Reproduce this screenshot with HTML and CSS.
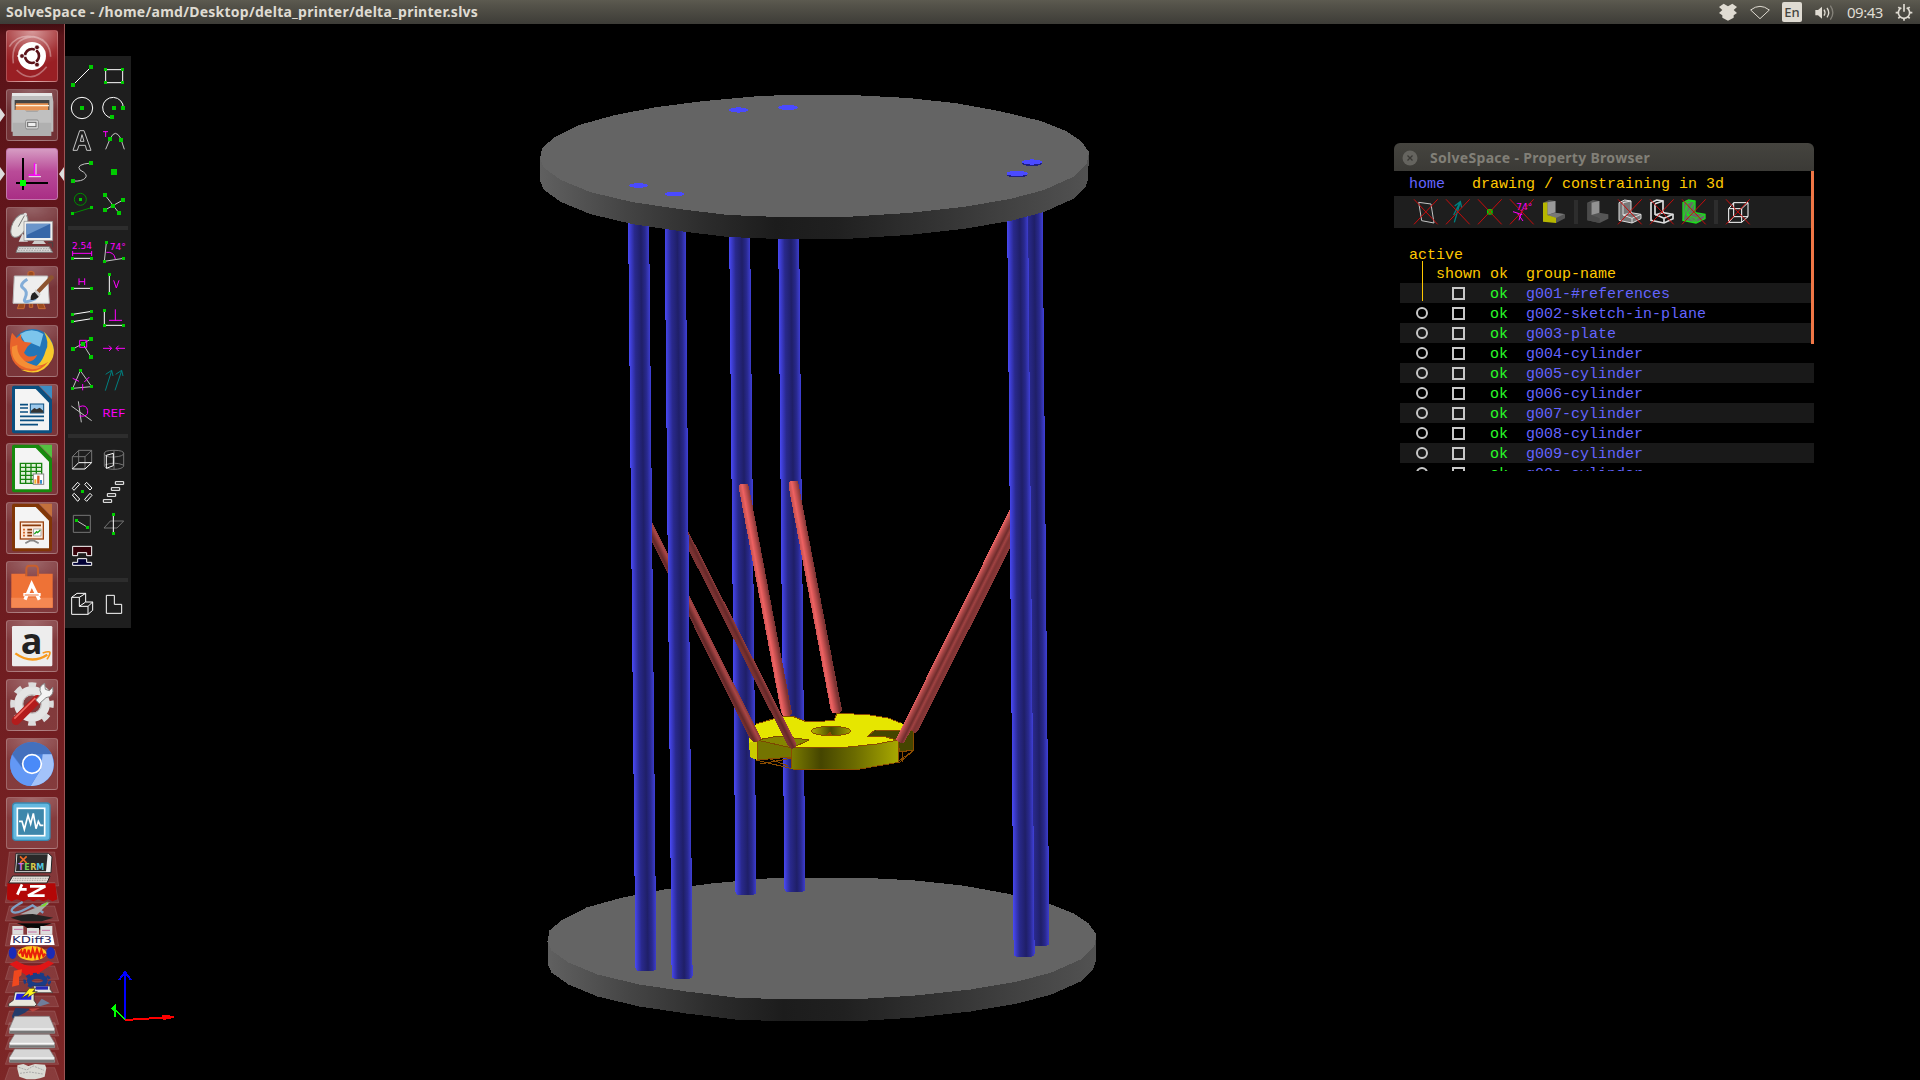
FILE: index.html
```html
<!DOCTYPE html>
<html lang="en">
<head>
<meta charset="utf-8">
<title>SolveSpace</title>
<link rel="stylesheet" href="styles.css">
</head>
<body>
<header class="panel">
  <span class="panel-title">SolveSpace - /home/amd/Desktop/delta_printer/delta_printer.slvs</span>
  <div class="indicators">
    <svg width="20" height="24" viewBox="54 0 60 72"><path d="M71 11L84 19L97 11L111 21L101 30L111 39L101 46V53L84 62L67 53V46L57 39L67 30L57 21Z" fill="#dfdbd2"/></svg>
    <svg width="22" height="24" viewBox="147 0 66 72"><path d="M152 30Q180 8 208 30L180 56Z" fill="none" stroke="#dfdbd2" stroke-width="3"/></svg>
    <span class="lang">En</span>
    <svg width="22" height="24" viewBox="341 0 66 72"><path d="M345 30H353L365 20V56L353 46H345Z" fill="#dfdbd2"/><path d="M371 29Q377 38 371 47M380 24Q390 38 380 52" fill="none" stroke="#dfdbd2" stroke-width="4"/><path d="M390 17Q405 38 390 59" fill="none" stroke="#85827a" stroke-width="4"/></svg>
    <span class="clock">09:43</span>
    <svg width="18" height="24" viewBox="585 0 54 72"><g fill="none" stroke="#dfdbd2"><path d="M604 23A17 17 0 1 0 620 23M612 12V35" stroke-width="5"/><path d="M595 38H587M629 38H637M600 50L595 55M624 50L629 55M600 26L595 21M624 26L629 21M612 55V62" stroke-width="5"/></g></svg>
  </div>
</header>
<div class="desktop">
<nav class="launcher">
  <div class="tile ubuntu"><svg viewBox="18 30 156 156"><path d="M40 130Q30 55 100 50Q150 60 152 110M50 150Q95 195 140 140M28 80Q60 30 130 60" fill="none" stroke="#fff" stroke-opacity=".35" stroke-width="5"/><circle cx="96" cy="108" r="42" fill="#fff"/><circle cx="96" cy="108" r="21" fill="none" stroke="#5a1218" stroke-width="8"/><path d="M96 108L52 108M96 108L117 72M96 108L117 144" stroke="#fff" stroke-width="4"/><g fill="#5a1218" stroke="#fff" stroke-width="2"><circle cx="66" cy="108" r="7"/><circle cx="111" cy="82" r="7"/><circle cx="111" cy="134" r="7"/></g></svg></div>
  <div class="tile"><svg viewBox="18 207 156 156"><path d="M36 219H156L160 245V335H34V245Z" fill="#bdbdbd"/><path d="M36 219H156V228H36Z" fill="#e6e6e6"/><rect x="44" y="240" width="104" height="35" fill="#444"/><path d="M48 250H145V272H46Z" fill="#e99454"/><path d="M47 257H147" stroke="#fff2dc" stroke-width="4"/><path d="M38 270H74L80 275H112L118 270H154V348H38Z" fill="#b0b0b0"/><path d="M38 270H154V308H38Z" fill="#d0d0d0" opacity=".5"/><rect x="77" y="300" width="38" height="27" rx="4" fill="#ddd" stroke="#888" stroke-width="3"/><rect x="83" y="307" width="25" height="13" fill="#eee" stroke="#666" stroke-width="3"/></svg></div>
  <div class="tile solve"><svg viewBox="18 384 156 156"><path d="M69 414V510M48 489H144" stroke="#000" stroke-width="6"/><path d="M104 430V468M86 465H120" stroke="#f0f" stroke-width="5"/><path d="M108 432V464M86 470H123" stroke="#eee" stroke-width="3"/><rect x="60" y="480" width="18" height="18" fill="#0f0"/></svg></div>
  <div class="tile"><svg viewBox="18 561 156 156"><path d="M68 640L84 665H56Z" fill="#ddd"/><ellipse cx="58" cy="617" rx="21" ry="38" transform="rotate(28 58 617)" fill="#e8e8e3" stroke="#888" stroke-width="3"/><path d="M55 620L76 582" stroke="#777" stroke-width="3"/><circle cx="76" cy="583" r="5" fill="#ddd"/><path d="M72 604H158V662H72Z" fill="#eee" stroke="#888" stroke-width="2"/><rect x="79" y="611" width="72" height="43" fill="#3666a8"/><path d="M80 612H150L80 645Z" fill="#6b95ca"/><path d="M103 662H130L138 672H96Z" fill="#ccc"/><path d="M55 680H148L158 697H48Z" fill="#ddd" stroke="#777" stroke-width="3"/><path d="M57 686H150M54 691H153" stroke="#888" stroke-width="2" stroke-dasharray="5 3"/><path d="M144 668H158V682" fill="none" stroke="#444" stroke-width="3"/></svg></div>
  <div class="tile"><svg viewBox="18 738 156 156"><path d="M84 768V757Q93 750 102 757V768M60 845L52 866H72L76 845M110 845L116 866H136L128 845M88 845V862H98V845" fill="#9b4c20" stroke="#c86a33" stroke-width="3"/><path d="M43 768H143L148 850H39Z" fill="#eee" stroke="#bbb" stroke-width="3"/><path d="M82 778Q55 795 70 805T75 835T108 835" fill="none" stroke="#83add8" stroke-width="9"/><path d="M108 812L152 766Q163 765 161 775L118 820Z" fill="#8d5430"/><path d="M106 808L122 822L115 833L104 820Z" fill="#ccc"/><path d="M104 816Q90 822 92 840Q108 840 116 830Z" fill="#222"/></svg></div>
  <div class="tile"><svg viewBox="18 -15 156 156"><circle cx="98" cy="60" r="63" fill="#2276b8"/><path d="M60 12Q95 -10 130 12L120 50L95 40L75 38Z" fill="#7cc5ec"/><path d="M132 5Q176 50 155 90Q125 145 62 119Q120 125 137 62Q150 40 132 5Z" fill="#f7c92c"/><path d="M36 8L50 24L64 12Q60 30 74 36L95 38L82 50L72 68Q85 88 112 74Q100 100 74 94Q110 120 145 95Q110 140 60 115Q30 95 30 55Q30 25 36 8Z" fill="#e8632b"/><path d="M36 50Q32 90 65 108Q95 126 125 110Q80 105 62 80Q50 65 52 45Z" fill="#f58d35"/></svg></div>
  <div class="tile"><svg viewBox="18 163 156 156"><path d="M42 168H116L156 210V305Q156 311 150 311H42Q36 311 36 305V174Q36 168 42 168Z" fill="#0a4f80"/><path d="M118 168H156V208Z" fill="#3c8dc4"/><path d="M45 178H107L147 219V302H45Z" fill="#f4f4f4"/><path d="M60 225H84M60 235H84M60 247H84M60 260H132M60 272H132M60 285H114" stroke="#0b4f81" stroke-width="5"/><rect x="91" y="223" width="40" height="27" fill="#9cc9ed" stroke="#0b4f81" stroke-width="3"/><path d="M93 249V243L103 235L110 239L119 234L130 243V249Z" fill="#333"/></svg></div>
  <div class="tile"><svg viewBox="18 340 156 156"><path d="M42 345H116L156 387V482Q156 488 150 488H42Q36 488 36 482V351Q36 345 42 345Z" fill="#178a0e"/><path d="M118 345H156V385Z" fill="#54c040"/><path d="M45 355H107L147 396V479H45Z" fill="#f4f4f4"/><path d="M61 401H125V461H61ZM61 413H125M61 425H125M61 437H125M61 449H125M77 401V461M93 401V461M109 401V461" fill="#dff0d8" stroke="#17820f" stroke-width="4"/><rect x="100" y="433" width="31" height="31" fill="#fff" stroke="#888" stroke-width="3"/><path d="M106 462V449" stroke="#f2b22b" stroke-width="6"/><path d="M123 462V451" stroke="#3a8fd0" stroke-width="6"/><path d="M115 462V438" stroke="#d75a1f" stroke-width="7"/></svg></div>
  <div class="tile"><svg viewBox="18 517 156 156"><path d="M42 522H116L156 564V659Q156 665 150 665H42Q36 665 36 659V528Q36 522 42 522Z" fill="#813606"/><path d="M118 522H156V562Z" fill="#c4713c"/><path d="M45 532H107L147 573V656H45Z" fill="#f4f4f4"/><rect x="61" y="577" width="69" height="51" fill="#fde8d8" stroke="#9b4312" stroke-width="4"/><path d="M67 587H123M82 600H96M82 609H96M82 618H96" stroke="#8a3b0c" stroke-width="5"/><path d="M69 600H75M69 609H75M69 618H75" stroke="#d66a30" stroke-width="5"/><rect x="101" y="598" width="22" height="21" fill="#fff" stroke="#888" stroke-width="2"/><path d="M103 613L110 606L113 609L121 601" fill="none" stroke="#20a020" stroke-width="4"/><path d="M96 628V634M76 641L90 633H102L116 641" fill="none" stroke="#888" stroke-width="5"/></svg></div>
  <div class="tile"><svg viewBox="18 694 156 156"><path d="M79 745V719Q79 708 88 708H104Q114 708 114 719V745" fill="none" stroke="#c85f2c" stroke-width="6"/><path d="M34 732H76V740H117V732H158V834H34Z" fill="#ee7236"/><path d="M34 804H158V834H34Z" fill="#f58852"/><path d="M75 810L95 763L118 810M70 795H122" fill="none" stroke="#fff" stroke-width="10"/><path d="M74 796H116" stroke="#ee7236" stroke-width="3"/></svg></div>
  <div class="tile"><svg viewBox="18 0 156 156"><rect x="36" y="18" width="121" height="121" rx="4" fill="#ededed"/><text x="95" y="101" text-anchor="middle" class="amazon">a</text><path d="M46 100Q95 135 142 104" fill="none" stroke="#f79a1c" stroke-width="7"/><path d="M128 99Q150 92 150 98T141 118" fill="none" stroke="#f79a1c" stroke-width="5"/></svg></div>
  <div class="tile"><svg viewBox="18 177 156 156"><circle cx="96" cy="252" r="40" fill="none" stroke="#e4e4e4" stroke-width="27"/><circle cx="96" cy="252" r="58" fill="none" stroke="#dcdcdc" stroke-width="15" stroke-dasharray="23 22.5" stroke-dashoffset="12"/><circle cx="96" cy="252" r="28" fill="none" stroke="#bbb" stroke-width="3"/><path d="M48 302L112 238" stroke="#b31c1c" stroke-width="26" stroke-linecap="round"/><path d="M43 296L106 234" stroke="#f06a60" stroke-width="5"/><path d="M107 240L124 222Q112 200 134 190L136 208L148 212L158 202Q164 230 138 233L118 251Z" fill="#f4f4f4" stroke="#888" stroke-width="3"/></svg></div>
  <div class="tile"><svg viewBox="18 354 156 156"><circle cx="96" cy="432" r="66" fill="#4c83dd"/><path d="M37 402Q60 364 98 366Q140 370 155 403H98L74 452Z" fill="#4470bd"/><path d="M155 403Q175 460 130 488Q110 500 92 498L123 447L128 403Z" fill="#a3c3fa"/><path d="M36 404Q20 450 50 480Q68 498 92 498L118 455L96 462L66 444Z" fill="#6398f5"/><circle cx="96" cy="432" r="28" fill="#4a8af8" stroke="#fff" stroke-width="5"/></svg></div>
  <div class="tile"><svg viewBox="18 531 156 156"><rect x="38" y="549" width="112" height="112" rx="10" fill="#63b8e0" stroke="#3a87ae" stroke-width="4"/><rect x="52" y="565" width="82" height="82" fill="#3e87ab" stroke="#fff" stroke-width="5"/><path d="M57 604H66L73 628L84 586L92 612L100 580L108 626L115 604L121 616H130" fill="none" stroke="#fff" stroke-width="5"/></svg></div>
  <svg class="stack" width="64" height="231" viewBox="0 12 192 693">
    <g fill="#fff" fill-opacity=".1" stroke="#fff" stroke-opacity=".2" stroke-width="2"><path d="M28 18H164L176 120H16Z"/><path d="M28 110H164L176 170H16Z"/><path d="M28 180H164L176 225H16Z"/><path d="M28 232H164L176 300H16Z"/><path d="M28 310H164L176 350H16Z"/><path d="M28 360H164L176 400H16Z"/><path d="M28 405H164L176 440H16Z"/><path d="M28 450H164L176 482H16Z"/><path d="M28 495H164L176 535H16Z"/><path d="M28 530H164L176 570H16Z"/><path d="M28 575H164L176 610H16Z"/><path d="M28 620H164L176 655H16Z"/><path d="M28 665H164L178 705H14Z"/></g>
    <path d="M48 22H145L156 32L153 80H44Z" fill="#eee" stroke="#222" stroke-width="3"/><path d="M52 25H143L138 76H48Z" fill="#292929"/>
    <path d="M60 31L80 51M80 31L60 51" stroke="#ee6a25" stroke-width="5"/>
    <g class="xterm"><text x="55" y="72" fill="#cf70df">T</text><text x="73" y="72" fill="#75d052">E</text><text x="91" y="72" fill="#d8c94b">R</text><text x="109" y="72" fill="#55c4dc">M</text></g>
    <path d="M22 112H166L172 160L158 166L145 160L130 166L115 160L100 166L85 160L70 166L50 160L35 166L21 160Z" fill="#b30707"/>
    <path d="M38 90H150L141 111H26Z" fill="#e8e2dc" stroke="#222" stroke-width="3"/><path d="M40 97H144M36 103H140" stroke="#777" stroke-width="2" stroke-dasharray="3 2"/>
    <path d="M66 115L52 146M62 130H80M90 121H136L84 149H134" fill="none" stroke="#fff" stroke-width="8"/>
    <path d="M68 168Q25 190 38 198T98 178L130 200M125 178L144 172" fill="none" stroke="#7fa0c4" stroke-width="7"/><path d="M60 205L132 175L150 168L135 183L110 207Z" fill="#aaa"/><path d="M118 182L145 166L135 181Z" fill="#7ddb2d"/>
    <path d="M32 215Q70 204 98 204L160 215L125 226H65Z" fill="#222"/><path d="M50 232H156L130 240L122 252Q100 242 82 246L72 239Z" fill="#080808"/>
    <path d="M37 240H70V266H37ZM81 246H117V266H81ZM121 240H157V266H121Z" fill="#ddd"/><path d="M42 250H68M84 258H110M126 253H150" stroke="#c76fa5" stroke-width="3"/><path d="M35 266H158L164 297H30Z" fill="#fff"/><text x="96" y="290" text-anchor="middle" textLength="120" lengthAdjust="spacingAndGlyphs" class="kdiff">KDiff3</text>
    <ellipse cx="38" cy="321" rx="12" ry="18" fill="#1b2bb7"/><ellipse cx="152" cy="321" rx="13" ry="18" fill="#1b2bb7"/><ellipse cx="96" cy="322" rx="43" ry="22" fill="#ffc81e"/><path d="M57 323L64 314L68 332L74 309L80 335L86 311L92 336L98 310L105 333L111 311L118 334L124 312L130 331L136 323" fill="none" stroke="#e8200a" stroke-width="6"/>
    <path d="M28 354L50 344Q95 375 145 344L162 352L92 397Z" fill="#e01616"/>
    <path d="M42 374L66 370L64 388L57 393V417L36 422Z" fill="#f0481e"/><ellipse cx="112" cy="404" rx="24" ry="13" fill="none" stroke="#1b3c85" stroke-width="14"/><ellipse cx="112" cy="404" rx="38" ry="20" fill="none" stroke="#1b3c85" stroke-width="8" stroke-dasharray="12 9"/>
    <path d="M100 420H150V430L158 440H105Z" fill="#e5e5dc" stroke="#333" stroke-width="2"/><path d="M107 421H144V431H107Z" fill="#2428b4"/><path d="M45 438H102V463L110 475L104 481H26V473L40 463Z" fill="#e8e8dc" stroke="#222" stroke-width="2"/><path d="M50 443H94V461H46Z" fill="#2020e0"/><path d="M64 457L88 427H107L98 437H112L82 455L86 444Z" fill="#fff31d" stroke="#333" stroke-width="2"/>
    <path d="M36 510L46 486L90 488L75 500L38 518Z" fill="#243b6a"/><path d="M110 478L125 458L150 472L120 481Z" fill="#6f7d9b"/><path d="M86 488L120 486L98 497Z" fill="#b7443e"/>
    <g fill="#d6d6d6" stroke="#7d7d7d" stroke-width="2"><path d="M44 511H148L164 548V562H28V548Z"/><path d="M44 565H148L164 591V605H28V591Z"/><path d="M44 609H148L164 635V649H28V635Z"/></g><path d="M29 549H163M29 592H163M29 636H163" stroke="#fff" stroke-width="3"/><path d="M30 558H163M30 601H163M30 645H163" stroke="#777" stroke-width="7"/>
    <path d="M52 658L70 654L85 660L105 654L135 656L139 666L134 692L120 697L105 700H80L58 692L52 668Z" fill="#dadad4"/><path d="M56 664L80 672L100 660L132 673M60 682L90 678L128 684" stroke="#aaa" stroke-width="3" fill="none" stroke-dasharray="6 3"/>
  </svg>
</nav>
<main class="viewport">
<svg class="scene" viewBox="65 24 1855 1056" shape-rendering="crispEdges">
  <defs>
    <linearGradient id="rim"><stop offset="0" stop-color="#606060"/><stop offset=".15" stop-color="#454545"/><stop offset=".3" stop-color="#2c2c2c"/><stop offset=".43" stop-color="#1c1c1c"/><stop offset=".54" stop-color="#202020"/><stop offset=".75" stop-color="#363636"/><stop offset="1" stop-color="#525252"/></linearGradient>
    <linearGradient id="pole"><stop offset="0" stop-color="#4848f0"/><stop offset=".12" stop-color="#3a3ac8"/><stop offset=".3" stop-color="#29298c"/><stop offset=".6" stop-color="#1f1f68"/><stop offset=".8" stop-color="#29298e"/><stop offset="1" stop-color="#3e3ed2"/></linearGradient>
    <linearGradient id="rodA" gradientUnits="userSpaceOnUse" x1="648" y1="535" x2="657" y2="530.5"><stop offset="0" stop-color="#7a3232"/><stop offset=".3" stop-color="#642828"/><stop offset=".75" stop-color="#a84646"/><stop offset="1" stop-color="#8c3a3a"/></linearGradient>
    <linearGradient id="rodC" gradientUnits="userSpaceOnUse" x1="739" y1="485" x2="749" y2="483.2"><stop offset="0" stop-color="#c85252"/><stop offset=".3" stop-color="#ee6262"/><stop offset=".6" stop-color="#c04e4e"/><stop offset="1" stop-color="#7a3232"/></linearGradient>
    <linearGradient id="rodE" gradientUnits="userSpaceOnUse" x1="1009" y1="511" x2="1024" y2="518.5"><stop offset="0" stop-color="#f06666"/><stop offset=".2" stop-color="#b04a4a"/><stop offset=".45" stop-color="#702c2c"/><stop offset=".6" stop-color="#a04242"/><stop offset=".75" stop-color="#7c3232"/><stop offset="1" stop-color="#8a3838"/></linearGradient>
    <linearGradient id="front"><stop offset="0" stop-color="#7c7c00"/><stop offset=".28" stop-color="#454500"/><stop offset=".6" stop-color="#6c6c00"/><stop offset="1" stop-color="#a8a800"/></linearGradient>
    <linearGradient id="hole"><stop offset="0" stop-color="#b5b500"/><stop offset=".5" stop-color="#4a4a00"/><stop offset="1" stop-color="#a0a000"/></linearGradient>
    <path id="face" d="M540 159L542 148L555 137L579 125L615 115L657 107L704 101L759 96L789 95H852L908 98L955 103L999 111L1041 121L1066 131L1081 141L1089 152L1087 163L1073 177L1044 190L1010 199L963 207L908 213L853 216.500H766L728 215L679 209L632 202L590 192L561 180L544 168Z"/>
    <g id="plate"><path fill="url(#rim)" d="M540 159L1089 152L1088 180L1086 186L1073 199L1044 212L1010 221L963 229L908 235L853 238.500H766L728 237L679 231L632 224L590 214L561 202L544 190L540 181Z"/><use href="#face" fill="#646464"/></g>
  </defs>
  <use href="#plate" x="7.5" y="782.5"/>
  <g fill="url(#pole)">
    <rect width="21" height="680" rx="5" ry="3" transform="matrix(1 0 .0095 1 729 215)"/>
    <rect width="21" height="677" rx="5" ry="3" transform="matrix(1 0 .0095 1 778 215)"/>
  </g>
  <g class="effector">
    <path fill="none" stroke="#8a4c00" d="M756 760L793 769L860 769L900 762L913 751V730M756 760L780 755M760 764L793 758M897 762L913 751M765 757L788 766M902 750L903 762"/>
    <path fill="#c9c900" d="M749 743L757 739V760L750 757Z"/>
    <path fill="#e6e600" d="M749 743L750 732L756 724L783 716L792 716L807 722L834 720.500L837 713L870 715L888 718L901 723L913 730L897 740L877 744L843 747H792L757 740Z"/>
    <path fill="#747400" d="M757 740L791 748V757L757 760Z"/>
    <path fill="#858500" stroke="#7c4700" d="M757 740L779 736L809 740L792 748Z"/>
    <path fill="#454500" stroke="#8a4c00" d="M868 736L875 730L913 731V750L900 752L897 740L882 736Z"/>
    <path fill="url(#front)" d="M791 747L843 748L877 744L898 740V762L857 769H791Z"/>
    <path fill="none" stroke="#8a4c00" d="M756 724L783 716L792 716L807 722L834 720.500L837 713L870 715L888 718L901 723M757 740V760L791 757M791 748V768M791 747.500H843L877 744L898 740V762"/>
    <ellipse cx="831" cy="731" rx="19.500" ry="4.800" fill="url(#hole)" stroke="#8a4c00"/>
    <path d="M826 735L830 731L832 735Z" fill="#8a4c00"/>
  </g>
  <path fill="url(#rodA)" d="M645 508L761 738L759 741L754 742L750 739L645 528Z"/>
  <path fill="url(#rodC)" d="M739 489V485L741 484H748L749 487L792 713L789 716H783L781 712Z"/>
  <path fill="url(#rodC)" transform="translate(49.5 -3)" d="M739 489V485L741 484H748L749 487L792.500 713L789.500 716H783L781 712Z"/>
  <path fill="url(#rodA)" transform="translate(35 -2)" d="M645 517L761.500 746L760 750L756 751L753 748L645 535Z"/>
  <path fill="url(#rodE)" d="M1014 501V540L918 731L915 733L911 730L904 743L901 743L896 740L897 737Z"/>
  <g fill="url(#pole)">
    <rect width="21" height="760" rx="5" ry="3" transform="matrix(1 0 .0098 1 628 211)"/>
    <rect width="21" height="768" rx="5" ry="3" transform="matrix(1 0 .0093 1 664.5 211)"/>
    <rect width="21" height="746" rx="5" ry="3" transform="matrix(1 0 .0093 1 1021.500 200)"/>
    <rect width="21" height="757" rx="5" ry="3" transform="matrix(1 0 .0088 1 1007 200)"/>
  </g>
  <use href="#plate"/>
  <g fill="#1f1f80"><ellipse cx="1032" cy="163.500" rx="10" ry="2.500"/><ellipse cx="1017" cy="175" rx="10" ry="2.500"/></g>
  <g fill="#4a4aff"><ellipse cx="738.500" cy="110" rx="10" ry="2.600"/><ellipse cx="788" cy="107.500" rx="10" ry="2.600"/><ellipse cx="638.500" cy="185.500" rx="10" ry="2.300"/><ellipse cx="674.500" cy="194" rx="9.500" ry="2.500"/><ellipse cx="1032" cy="162" rx="10" ry="2.600"/><ellipse cx="1017" cy="173.500" rx="10.500" ry="2.600"/></g>
  <g fill="none" stroke-width="2"><path stroke="#00f" d="M125 1019V972M119 980L125 972L131 980"/><path stroke="#0f0" stroke-width="1.500" d="M125 1019L114 1009M112 1008L116 1005M115 1005V1017M112 1008L116 1012"/><path stroke="#f00" d="M125 1020L174 1017M162 1015.500L174 1017L163 1019"/></g>
</svg>

<aside class="tools">
  <svg viewBox="198 120 96 96"><path class="w" d="M219 195L273 141"/><path class="g" d="M213 189h12v12h-12zM267 135h12v12h-12z"/></svg>
  <svg viewBox="294 120 96 96"><path class="w" d="M317 149H368V188H317Z"/><path class="g" d="M312 144h9v9h-9zM363 144h9v9h-9zM312 183h9v9h-9zM363 183h9v9h-9z"/></svg>
  <svg viewBox="198 216 96 96"><circle class="w" cx="246" cy="264" r="32"/><path class="g" d="M240 258h12v12h-12z"/></svg>
  <svg viewBox="294 216 96 96"><path class="w" d="M336 294A31 31 0 1 1 370 264"/><path class="g" d="M336 258h12v12h-12zM363 258h12v12h-12zM330 285h12v12h-12z"/></svg>
  <svg viewBox="198 312 96 96"><path class="l" d="M219 391L239 332H252L273 391H260L256 376H237L232 391ZM241 364H252L246 344Z"/></svg>
  <svg viewBox="294 312 96 96"><path class="l" d="M317 388L331 355Q346 325 362 355L373 388"/><path class="m" d="M309 335H324M317 335V351"/><path class="g" d="M324 351h12v12h-12zM357 354h12v12h-12z"/></svg>
  <svg viewBox="198 408 96 96"><path class="l" d="M219 483Q246 485 256 474T240 450Q225 433 273 429"/><path class="g" d="M213 477h12v12h-12zM267 423h12v12h-12z"/></svg>
  <svg viewBox="294 408 96 96"><path class="g" d="M333 447h18v18h-18z"/></svg>
  <svg viewBox="198 504 96 96"><circle cx="241" cy="538" r="18" fill="none" stroke="#008c00" stroke-width="3"/><path d="M218 580L274 563" stroke="#008c00" stroke-width="3"/><path class="g" d="M237 534h9v9h-9zM213 576h9v9h-9zM270 558h9v9h-9z"/></svg>
  <svg viewBox="294 504 96 96"><path class="l" d="M315 525L357 579M315 570L369 540"/><path class="g" d="M309 519h12v12h-12zM351 573h12v12h-12zM309 564h12v12h-12zM363 534h12v12h-12zM333 552h12v12h-12z"/></svg>
  <hr>
  <svg viewBox="198 648 96 96"><text x="216" y="688" textLength="60" lengthAdjust="spacingAndGlyphs" class="t">2.54</text><path class="m" d="M218 693V708M275 693V708M218 700H275"/><path class="w" d="M218 715H275"/><path class="g" d="M213 711h9v9h-9zM270 711h9v9h-9z"/></svg>
  <svg viewBox="294 648 96 96"><path class="l" d="M319 668L313 724L371 715"/><path class="m" d="M319 697Q342 694 346 717"/><text x="329" y="690" textLength="48" lengthAdjust="spacingAndGlyphs" class="t">74°</text><path class="g" d="M315 663h9v9h-9zM309 720h9v9h-9zM366 711h9v9h-9z"/></svg>
  <svg viewBox="198 744 96 96"><path class="m" d="M237 775V795M254 775V795M237 785H254"/><path class="w" d="M218 805H275"/><path class="g" d="M213 801h9v9h-9zM270 801h9v9h-9z"/></svg>
  <svg viewBox="294 744 96 96"><path class="m" d="M341 781L349 804L357 781"/><path class="w" d="M328 763V820"/><path class="g" d="M324 759h9v9h-9zM324 816h9v9h-9z"/></svg>
  <svg viewBox="198 840 96 96"><path class="w" d="M218 883L275 874M218 905L275 896"/><path class="g" d="M213 879h9v9h-9zM270 870h9v9h-9zM213 900h9v9h-9zM270 891h9v9h-9z"/></svg>
  <svg viewBox="294 840 96 96"><path class="w" d="M313 871V916H371"/><path class="m" d="M346 868V902M327 901H366"/><path class="g" d="M309 867h9v9h-9zM309 912h9v9h-9zM366 912h9v9h-9z"/></svg>
  <svg viewBox="198 6 96 96"><path class="l" d="M219 57L273 27M249 42L273 81"/><path class="g" d="M213 51h12v12h-12zM267 21h12v12h-12zM267 75h12v12h-12zM243 36h12v12h-12z"/><path class="m" d="M239 31H260V52H239Z"/></svg>
  <svg viewBox="294 6 96 96"><path class="m" d="M309 55H335M327 47L335 55L327 63M375 55H348M356 47L348 55L356 63"/></svg>
  <svg viewBox="198 102 96 96"><path class="l" d="M241 122L218 175L275 170Z"/><path class="m" d="M218 145L237 154M268 141L253 156M248 162V181"/><path class="g" d="M237 117h9v9h-9zM213 171h9v9h-9zM270 165h9v9h-9z"/></svg>
  <svg viewBox="294 102 96 96"><path d="M316 182L335 122M317 133L335 121L339 138M345 181L365 122M347 133L365 121L369 138" fill="none" stroke="#008080" stroke-width="3"/></svg>
  <svg viewBox="198 198 96 96"><path class="l" d="M214 228L275 272M235 214L244 277"/><path class="m" d="M238 230Q260 222 263 242T238 258"/></svg>
  <svg viewBox="294 198 96 96"><text x="307" y="260" textLength="68" lengthAdjust="spacingAndGlyphs" class="t ref">REF</text></svg>
  <hr>
  <svg viewBox="198 342 96 96"><path class="d" d="M236 361H275V398M217 380V417M217 380L236 361M255 380L275 361M236 361V398M217 380H255V417"/><path class="w" d="M217 417H255L275 398H236Z"/></svg>
  <svg viewBox="294 342 96 96"><path class="d" d="M313 370Q313 361 342 361T371 370T342 381T313 370V409Q320 418 342 418T371 409V370M342 361V400M342 381V418M315 405Q342 394 370 405"/><path class="w" d="M319 376L340 370V407L319 415Z"/></svg>
  <svg viewBox="198 438 96 96"><path class="w" d="M217 475L233 457L239 463L222 481ZM254 463L260 457L276 474L270 480ZM217 495L223 490L239 507L233 514ZM270 490L276 496L260 514L254 508Z"/><path class="g" d="M243 480h9v9h-9z"/></svg>
  <svg viewBox="294 438 96 96"><path class="w" d="M346 455H371V463H346ZM334 473H359V481H334ZM322 491H347V499H322ZM310 509H335V517H310Z"/></svg>
  <svg viewBox="198 534 96 96"><path class="d" d="M220 556H271V607H220Z"/><path class="l" d="M230 572L263 592"/><path class="g" d="M225 567h9v9h-9zM258 588h9v9h-9z"/></svg>
  <svg viewBox="294 534 96 96"><path class="d" d="M331 573H371L351 594H312Z"/><path class="w" d="M340 553V610"/><path class="g" d="M336 549h9v9h-9zM336 606h9v9h-9z"/></svg>
  <svg viewBox="198 630 96 96"><path class="w maroon" d="M218 649H275V677H260V668H233V677H218Z"/><path class="w navy" d="M233 686H260V697H275V706H218V697H233Z"/></svg>
  <svg viewBox="294 630 96 96"></svg>
  <hr>
  <svg viewBox="198 774 96 96"><path class="w" d="M215 802H238V829H264V853H215ZM215 802L231 790H257L238 802M257 790V816H278L264 829M238 829L257 816M278 816V841L264 853"/></svg>
  <svg viewBox="294 774 96 96"><path class="w" d="M319 796H343V823H365V850H319Z"/></svg>
</aside>

<section class="browser">
  <div class="browser-title"><svg width="16" height="16" viewBox="0 0 16 16"><circle cx="8" cy="8" r="7.500" fill="#65645f"/><path d="M5.500 5.500L10.500 10.500M10.500 5.500L5.500 10.500" stroke="#3a3935" stroke-width="1.300"/></svg><span>SolveSpace - Property Browser</span></div>
  <div class="browser-body">
    <div class="crumbs"><span class="link">home</span><span>drawing / constraining in 3d</span></div>
    <div class="bar">
      <svg viewBox="75 183 96 96"><path class="l" d="M101 202L138 207L147 264L110 257Z"/><path class="x" d="M87 193L158 268M158 193L87 268"/></svg>
      <svg viewBox="171 183 96 96"><path d="M208 262L226 200M209 213L226 200L230 218M206 240L224 204" fill="none" stroke="#008080" stroke-width="4"/><path class="x" d="M183 193L254 268M254 193L183 268"/></svg>
      <svg viewBox="267 183 96 96"><path class="g" d="M306 222h17v17h-17z"/><path class="x" d="M279 193L350 268M350 193L279 268"/></svg>
      <svg viewBox="363 183 96 96"><text x="394" y="226" textLength="48" lengthAdjust="spacingAndGlyphs" class="t">74°</text><path class="m" d="M384 230L412 239M412 222L402 256M398 236L414 258"/><path class="x" d="M375 193L446 268M446 193L375 268"/></svg>
      <svg viewBox="459 183 96 96"><path d="M474 203L492 195L512 198V234L540 238V250L513 264L487 238Z" fill="#555"/><path d="M487 202L511 198V232L487 240Z" fill="#999"/><path d="M487 240L511 233L538 237L513 249Z" fill="#777"/><path d="M474 203L487 202V240L513 248V264L474 260Z" fill="#b6b600"/></svg>
      <i></i>
      <svg viewBox="591 183 96 96"><path d="M607 203L624 195L643 198V233L670 238V251L644 264L607 256Z" fill="#555"/><path d="M619 203L643 198V233L619 240Z" fill="#929292"/><path d="M607 203L619 203V240L644 250V264L607 256Z" fill="#4a4a4a"/></svg>
      <svg viewBox="687 183 96 96"><path d="M702 203L719 195L738 198V233L768 238V251L741 264L702 256Z" fill="#777" stroke="#ddd" stroke-width="3"/><path d="M714 203V240L741 250V264M714 203L738 198M714 240L738 233M741 250L768 238" fill="none" stroke="#ddd" stroke-width="3"/><path class="x" d="M699 193L770 268M770 193L699 268"/></svg>
      <svg viewBox="783 183 96 96"><path d="M798 203L815 195L834 198V233L864 238V251L837 264L798 256Z" fill="#111" stroke="#ddd" stroke-width="5"/><path d="M810 207V238L837 250V264M810 206L834 198M810 240L834 233M837 250L864 238" stroke="#ddd" stroke-width="5" fill="none"/><path class="x" d="M795 193L866 268M866 193L795 268"/></svg>
      <svg viewBox="879 183 96 96"><path d="M894 203L911 195L930 198V233L960 238V251L933 264L894 256Z" fill="#647064" stroke="#1be01b" stroke-width="4"/><path d="M906 203V240L933 250V264M906 203L930 198M906 240L930 233M933 250L960 238M894 256L906 203M906 240L930 198M906 240L933 264" stroke="#1be01b" stroke-width="3" fill="none"/><path class="x" d="M891 193L962 268M962 193L891 268"/></svg>
      <i></i>
      <svg viewBox="1011 183 96 96"><path class="w" d="M1031 221H1070V262H1031ZM1031 221L1046 203H1089L1070 221M1089 203V245L1070 262M1046 203V245H1089M1031 262L1046 245"/><path class="x" d="M1023 193L1094 268M1094 193L1023 268"/></svg>
    </div>
    <div class="active">active</div>
    <div class="row head"><span class="c-shown">shown</span><span class="c-ok">ok</span><span>group-name</span></div>
    <div class="row odd"><span class="radio none"></span><span class="box"></span><b>ok</b><em>g001-#references</em></div>
    <div class="row"><span class="radio"></span><span class="box"></span><b>ok</b><em>g002-sketch-in-plane</em></div>
    <div class="row odd"><span class="radio"></span><span class="box"></span><b>ok</b><em>g003-plate</em></div>
    <div class="row"><span class="radio"></span><span class="box"></span><b>ok</b><em>g004-cylinder</em></div>
    <div class="row odd"><span class="radio"></span><span class="box"></span><b>ok</b><em>g005-cylinder</em></div>
    <div class="row"><span class="radio"></span><span class="box"></span><b>ok</b><em>g006-cylinder</em></div>
    <div class="row odd"><span class="radio"></span><span class="box"></span><b>ok</b><em>g007-cylinder</em></div>
    <div class="row"><span class="radio"></span><span class="box"></span><b>ok</b><em>g008-cylinder</em></div>
    <div class="row odd"><span class="radio"></span><span class="box"></span><b>ok</b><em>g009-cylinder</em></div>
    <div class="row"><span class="radio"></span><span class="box"></span><b>ok</b><em>g00a-cylinder</em></div>
    <div class="active-line"></div>
    <div class="scroll"></div>
  </div>
</section>
</main>
<svg class="marks" width="65" height="170" viewBox="0 0 65 170"><path d="M0 84L5 91L0 98ZM0 143L5 150L0 157ZM64 143L59 150L64 157Z" fill="#ddd"/></svg>
</div>
</body>
</html>
```

FILE: styles.css
```css
* { box-sizing: border-box; }
body { margin: 0; width: 1920px; height: 1080px; overflow: hidden; background: #000; display: flex; flex-direction: column; font-family: "Open Sans", "Noto Sans", sans-serif; }
svg { display: block; flex: none; }

.panel { height: 24px; flex: none; display: flex; align-items: center; justify-content: space-between; padding: 0 7px 0 6px; background: linear-gradient(#5c5a50, #55534a 20%, #3d3c37); color: #dfdbd2; }
.panel-title { font: 700 14px/24px "Noto Sans", sans-serif; letter-spacing: .25px; white-space: nowrap; }
.indicators { display: flex; align-items: center; height: 24px; gap: 11px; }
.lang { width: 20px; height: 20px; margin-right: 1px; border-radius: 2px; background: #dfdbd2; color: #45443f; font: 500 13px/21px "Noto Sans", sans-serif; text-align: center; }
.clock { font: 400 15px/24px "Noto Sans", sans-serif; width: 37px; white-space: nowrap; letter-spacing: -.5px; }

.desktop { position: relative; display: flex; flex: 1; min-height: 0; }
.launcher { width: 65px; flex: none; display: flex; flex-direction: column; align-items: flex-start; padding-top: 6px; border-right: 1px solid #9b5555; background: linear-gradient(#430d11, #5a1318 12px, #64171c 25%, #711e21 65%, #7c2626); }
.tile { width: 52px; height: 52px; margin: 0 0 7px 6px; flex: none; border-radius: 3px; border: 1px solid rgba(255,255,255,.22); background: radial-gradient(ellipse 42px 24px at 50% 0, rgba(255,255,255,.3), rgba(255,255,255,.08)), rgba(255,255,255,.05); }
.tile svg { width: 52px; height: 52px; margin: -1px; overflow: visible; }
.tile.ubuntu { background: radial-gradient(ellipse 45px 35px at 50% 0, #d79a9b, #a23033 75%, #991f24); }
.tile.solve { background: linear-gradient(#d69cc3, #b94b98 45%, #a92e85); border-color: #c376ac; }
.stack { margin-top: -6px; }
.amazon { font: 700 108px "Open Sans", sans-serif; fill: #222; }
.xterm { font: 700 24px "DejaVu Sans", sans-serif; }
.kdiff { font: 400 25px "DejaVu Sans", sans-serif; fill: #26265e; }
.marks { position: absolute; left: 0; top: -.5px; }

.viewport { position: relative; flex: 1; background: #000; }
.scene { width: 1855px; height: 1056px; }

.tools { position: absolute; left: 0; top: 32px; width: 66px; height: 572px; padding: 4px 1px 8px; display: grid; grid-template-columns: 32px 32px; grid-auto-rows: auto; align-content: start; background: #1e1e1e; }
.tools svg { width: 32px; height: 32px; }
.tools hr { grid-column: 1 / 3; width: 60px; height: 4px; margin: 6px 2px; border: 0; background: #2d2d2d; }
.w, .l, .m, .d, .x { fill: none; stroke-width: 3; }
.w { stroke: #fff; }
.l { stroke: #c4c4c4; }
.m { stroke: #f0f; }
.d { stroke: #757575; }
.x { stroke: #c80c0c; }
.g { fill: #0c0; }
.maroon { fill: #350008; }
.navy { fill: #000035; }
.t { font: 26px "DejaVu Sans", sans-serif; fill: #f0f; }
.t.ref { font: 34px "Open Sans", sans-serif; }

.browser { position: absolute; left: 1329px; top: 119px; width: 420px; height: 328px; display: flex; flex-direction: column; }
.browser-title { height: 28px; flex: none; padding: 1px 0 0 8px; display: flex; align-items: center; gap: 12px; border-radius: 6px 6px 0 0; background: linear-gradient(#45443f, #3b3a36); color: #817f77; font: 700 14px/27px "Noto Sans", sans-serif; letter-spacing: .3px; white-space: nowrap; }
.browser-body { position: relative; flex: 1; overflow: hidden; background: #000; color: #ffc800; font: 15px/20px "Liberation Mono", monospace; white-space: nowrap; }
.crumbs { height: 25px; padding: 4px 0 0 15px; display: flex; gap: 27px; }
.link { color: #6464ff; }
.bar { height: 32px; padding-left: 16px; display: flex; background: #1e1e1e; }
.bar svg { width: 32px; height: 32px; }
.bar i { width: 4px; height: 24px; margin: 4px; background: #2d2d2d; }
.active { height: 35px; padding: 18px 0 0 15px; line-height: 20px; }
.row { height: 20px; margin-left: 6px; display: flex; align-items: flex-start; }
.row.odd { background: #191919; }
.row b, .row em, .head span { padding-top: 2px; line-height: 20px; }
.head { padding-left: 36px; gap: 9px; }
.head .c-ok { margin-right: 9px; }
.radio { width: 12px; height: 12px; margin: 4px 24px 0 16px; border: 2px solid #c8c8c8; border-radius: 50%; }
.radio.none { visibility: hidden; }
.box { width: 13px; height: 13px; margin: 4px 25px 0 0; border: 2px solid #c8c8c8; }
.row b { font-weight: 400; color: #28ff28; margin-right: 18px; }
.row em { font-style: normal; color: #6464ff; }
.active-line { position: absolute; left: 28px; top: 90px; width: 1px; height: 40px; background: #ffc800; }
.scroll { position: absolute; right: 0; top: 0; width: 3px; height: 173px; background: #f07746; }
```
